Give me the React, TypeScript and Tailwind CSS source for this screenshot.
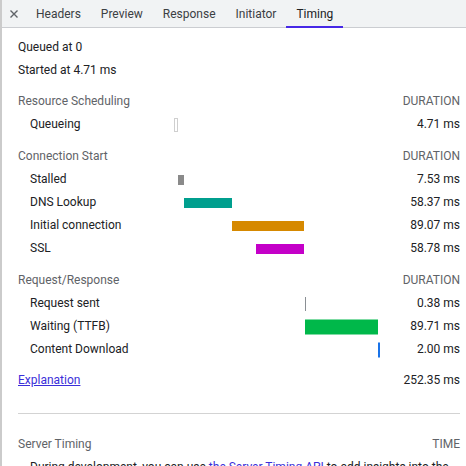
import React from "react";

const SCALE = 0.816;

type Phase = {
  label: string;
  start: number;
  ms: number;
  kind: "hollow" | "solid" | "line";
  color: string;
  h: number;
};

const sections: { title: string; rows: Phase[] }[] = [
  {
    title: "Resource Scheduling",
    rows: [{ label: "Queueing", start: 0, ms: 4.71, kind: "hollow", color: "#c9c9c9", h: 14 }],
  },
  {
    title: "Connection Start",
    rows: [
      { label: "Stalled", start: 4.71, ms: 7.53, kind: "solid", color: "#8a8a8a", h: 10 },
      { label: "DNS Lookup", start: 12.24, ms: 58.37, kind: "solid", color: "#009f8e", h: 10 },
      { label: "Initial connection", start: 70.61, ms: 89.07, kind: "solid", color: "#d68900", h: 10 },
      { label: "SSL", start: 100.9, ms: 58.78, kind: "solid", color: "#c400c8", h: 10 },
    ],
  },
  {
    title: "Request/Response",
    rows: [
      { label: "Request sent", start: 160.4, ms: 0.38, kind: "line", color: "#8a8f94", h: 14 },
      { label: "Waiting (TTFB)", start: 160.4, ms: 89.71, kind: "solid", color: "#00b84a", h: 15 },
      { label: "Content Download", start: 250.1, ms: 2.0, kind: "solid", color: "#1a73e8", h: 15 },
    ],
  },
];

const tabs = ["Headers", "Preview", "Response", "Initiator", "Timing"];

function Bar({ p }: { p: Phase }) {
  const left = p.start * SCALE;
  const width = Math.max(p.kind === "line" ? 1 : 2, p.ms * SCALE);
  const base = "absolute top-1/2 -translate-y-1/2";
  if (p.kind === "hollow") {
    return (
      <div
        className={`${base} border border-[#cfcfcf] bg-white`}
        style={{ left, width, height: p.h }}
      />
    );
  }
  return (
    <div
      className={base}
      style={{ left, width, height: p.h, backgroundColor: p.color }}
    />
  );
}

export default function App() {
  return (
    <div className="h-[466px] w-[466px] overflow-hidden border-l-2 border-[#cbcbcb] bg-white font-['Roboto',_sans-serif] text-[12px] text-[#202124]">
      {/* tab strip */}
      <div className="flex h-[28px] items-stretch border-b border-[#cbcdd1] bg-[#f1f3f4]">
        <div className="flex w-[24px] items-center justify-center text-[#5f6368]">
          <svg width="8" height="8" viewBox="0 0 8 8" stroke="currentColor" strokeWidth="1.4">
            <path d="M0.5 0.5 L7.5 7.5 M7.5 0.5 L0.5 7.5" />
          </svg>
        </div>
        {tabs.map((t) => (
          <div
            key={t}
            className={`relative flex items-center px-[10px] ${
              t === "Timing" ? "text-[#202124]" : "text-[#3c4043]"
            }`}
          >
            {t}
            {t === "Timing" && (
              <div className="absolute inset-x-0 bottom-[-1px] h-[2px] bg-[#4628e6]" />
            )}
          </div>
        ))}
      </div>

      <div className="pl-[16px] pr-[6px] pt-[8px] leading-[23px]">
        <div>Queued at 0</div>
        <div>Started at 4.71 ms</div>

        {sections.map((s, i) => (
          <div key={s.title} className={i === 0 ? "mt-[8px]" : "mt-[9px]"}>
            <div className="flex justify-between text-[#5f6368]">
              <span>{s.title}</span>
              <span>DURATION</span>
            </div>
            {s.rows.map((p) => (
              <div key={p.label} className="flex h-[23px]">
                <div className="w-[156px] pl-[12px]">{p.label}</div>
                <div className="relative flex-1">
                  <Bar p={p} />
                </div>
                <div className="w-[72px] text-right">{p.ms.toFixed(2)} ms</div>
              </div>
            ))}
          </div>
        ))}

        <div className="mt-[8px] flex justify-between">
          <a href="#" className="text-[#3b2fd9] underline">
            Explanation
          </a>
          <span>252.35 ms</span>
        </div>

        <div className="mt-[21px] h-px bg-[#d3d3d3]" />

        <div className="mt-[19px] flex justify-between text-[#5f6368]">
          <span>Server Timing</span>
          <span>TIME</span>
        </div>
        <p className="pl-[12px]">
          During development, you can use{" "}
          <a href="#" className="text-[#3b2fd9]">
            the Server Timing API
          </a>{" "}
          to add insights into the server-side timing of this request.
        </p>
      </div>
    </div>
  );
}
